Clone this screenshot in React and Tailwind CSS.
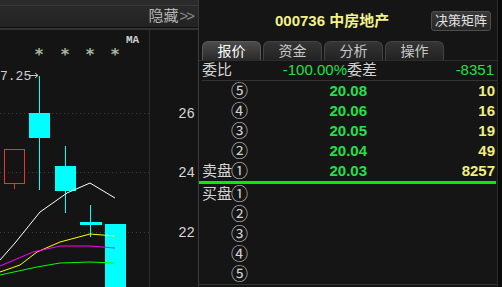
import React from "react";

const CJK = "font-['Liberation_Sans','Noto_Sans_CJK_SC',sans-serif]";

// sell side (卖盘) rows, top to bottom
const sellRows = [
  { n: "⑤", price: "20.08", vol: "10" },
  { n: "④", price: "20.06", vol: "16" },
  { n: "③", price: "20.05", vol: "19" },
  { n: "②", price: "20.04", vol: "49" },
  { n: "①", price: "20.03", vol: "8257", label: "卖盘" },
];

const buyRows = [
  { n: "①", label: "买盘" },
  { n: "②" },
  { n: "③" },
  { n: "④" },
  { n: "⑤" },
];

const tabs = ["报价", "资金", "分析", "操作"];

const pts = (arr) => arr.map((p) => p.join(",")).join(" ");

const KChart = () => (
  <svg width="149" height="257" className="block">
    {[83, 142, 202].map((y) => (
      <line key={y} x1="0" x2="149" y1={y + 0.5} y2={y + 0.5} stroke="#3c3c3c" strokeDasharray="1 3" />
    ))}
    <text x="126" y="13" fill="#cfcfcf" fontSize="11" fontFamily="Liberation Mono, monospace" fontWeight="bold">MA</text>
    {[39, 65, 90, 115].map((x) => (
      <text key={x} x={x} y="30" fill="#a8b8a4" fontSize="16" fontWeight="bold" textAnchor="middle" fontFamily="DejaVu Sans Mono, monospace">*</text>
    ))}
    <text x="0" y="50" fill="#cfcfcf" fontSize="13" fontFamily="Liberation Mono, monospace">7.25</text>
    <line x1="29" x2="38" y1="45.5" y2="45.5" stroke="#cfcfcf" />
    <path d="M35 43 L38 45.5 L35 48" fill="none" stroke="#cfcfcf" />
    {/* candles */}
    <line x1="39.5" x2="39.5" y1="46" y2="160" stroke="#00ffff" />
    <rect x="29" y="83" width="21" height="25" fill="#00ffff" />
    <line x1="14.5" x2="14.5" y1="153" y2="159" stroke="#e8382c" />
    <rect x="4.5" y="119.5" width="20" height="34" fill="none" stroke="#e8382c" />
    <line x1="65.5" x2="65.5" y1="116" y2="183" stroke="#00ffff" />
    <rect x="55" y="136" width="21" height="25" fill="#00ffff" />
    <line x1="90.5" x2="90.5" y1="175" y2="207" stroke="#00ffff" />
    <rect x="80" y="192" width="22" height="3" fill="#00ffff" />
    <rect x="105" y="194" width="21" height="70" fill="#00ffff" />
    {/* moving averages */}
    <polyline fill="none" stroke="#ffffff" strokeWidth="1" points={pts([[0, 230], [15, 213], [40, 182], [67, 163], [90, 153], [115, 168]])} />
    <polyline fill="none" stroke="#ffff00" strokeWidth="1" points={pts([[0, 242], [20, 235], [37, 222], [60, 212], [90, 204], [115, 206]])} />
    <polyline fill="none" stroke="#ff00ff" strokeWidth="1" points={pts([[0, 236], [33, 222], [60, 216], [90, 216], [115, 218]])} />
    <polyline fill="none" stroke="#00ff00" strokeWidth="1" points={pts([[0, 245], [37, 237], [60, 233], [90, 232], [115, 233]])} />
  </svg>
);

const Axis = () => (
  <svg width="49" height="257" className="block">
    {[["26", 83], ["24", 142], ["22", 202]].map(([t, y]) => (
      <text key={t} x="45" y={y + 5} fill="#d8d8d8" fontSize="14" textAnchor="end" fontFamily="Liberation Mono, monospace">{t}</text>
    ))}
  </svg>
);

const Row = ({ r }) => (
  <div className="flex h-[20px] items-center text-[14px]">
    <div className="w-[50px] flex items-center text-[#d4d4d4] whitespace-nowrap">
      <span className="w-[29px] text-[15px]">{r.label || ""}</span>
      <span className="text-[17px] leading-none">{r.n}</span>
    </div>
    <div className="w-[115px] text-right font-bold text-[#22e04a] font-['Liberation_Sans',sans-serif] text-[15px]">{r.price}</div>
    <div className="flex-1 text-right pr-[2px] font-bold text-[#f0f07c] font-['Liberation_Sans',sans-serif] text-[15px]">{r.vol}</div>
  </div>
);

export default function App() {
  return (
    <div className={`w-[502px] h-[287px] flex bg-[#0a0a0a] overflow-hidden ${CJK}`}>
      {/* left: chart */}
      <div className="w-[199px] flex flex-col bg-[#141414] border-r border-[#3a3a3a]">
        <div className="h-[5px] bg-[#2b2b2b]" />
        <div className="h-[23px] flex items-center justify-end pr-[5px] bg-gradient-to-b from-[#2a2a2a] to-[#222222] border-t border-[#383838] border-b border-b-[#0e0e0e] text-[15px] text-[#b4b4b4]">
          隐藏<span className="text-[#8c8c8c] tracking-[-2px] ml-[1px]">&gt;&gt;</span>
        </div>
        <div className="h-[2px] bg-[#333333]" />
        <div className="flex-1 flex">
          <div className="w-[150px] border-r border-[#2e2e2e]">
            <KChart />
          </div>
          <Axis />
        </div>
      </div>

      {/* right: quote panel */}
      <div className="w-[299px] flex flex-col bg-[#151515] border-r border-[#2a2a2a]">
        <div className="h-[41px] relative">
          <div className="absolute left-[76px] top-[10px] text-[15px] font-bold text-[#f2f28a] whitespace-nowrap">
            000736 中房地产
          </div>
          <div className="absolute left-[232px] top-[11px] w-[60px] h-[20px] flex items-center justify-center rounded-[3px] border border-[#4e4e4e] bg-gradient-to-b from-[#383838] to-[#262626] text-[13px] text-[#e2e2e2]">
            决策矩阵
          </div>
        </div>
        <div className="h-[20px] flex gap-[2px] pl-[3px] border-b border-[#2c2c2c]">
          {tabs.map((t, i) => (
            <div
              key={t}
              className={`w-[59px] flex items-center justify-center rounded-t-[6px] border border-b-0 text-[14px] ${
                i === 0
                  ? "bg-gradient-to-b from-[#4c4c4c] to-[#2a2a2a] border-[#5a5a5a] text-white"
                  : "bg-gradient-to-b from-[#353535] to-[#222222] border-[#444444] text-[#c8c8c8]"
              }`}
            >
              {t}
            </div>
          ))}
        </div>
        <div className="flex-1 flex flex-col pl-[3px]">
          <div className="flex h-[20px] items-center text-[15px] border-b border-[#333333]">
            <span className="w-[50px] text-[#d4d4d4]">委比</span>
            <span className="w-[95px] text-right text-[#22e04a] font-['Liberation_Sans',sans-serif] text-[15px]">-100.00%</span>
            <span className="w-[30px] text-[#d4d4d4]">委差</span>
            <span className="flex-1 text-right pr-[3px] text-[#22e04a] font-['Liberation_Sans',sans-serif] text-[15px]">-8351</span>
          </div>
          {sellRows.map((r) => (
            <Row key={"s" + r.n} r={r} />
          ))}
          <div className="h-[3px] bg-[#00ee00] -ml-[3px] mr-[1px]" />
          {buyRows.map((r) => (
            <Row key={"b" + r.n} r={r} />
          ))}
          <div className="h-px bg-[#333333] -ml-[3px]" />
        </div>
      </div>
    </div>
  );
}
